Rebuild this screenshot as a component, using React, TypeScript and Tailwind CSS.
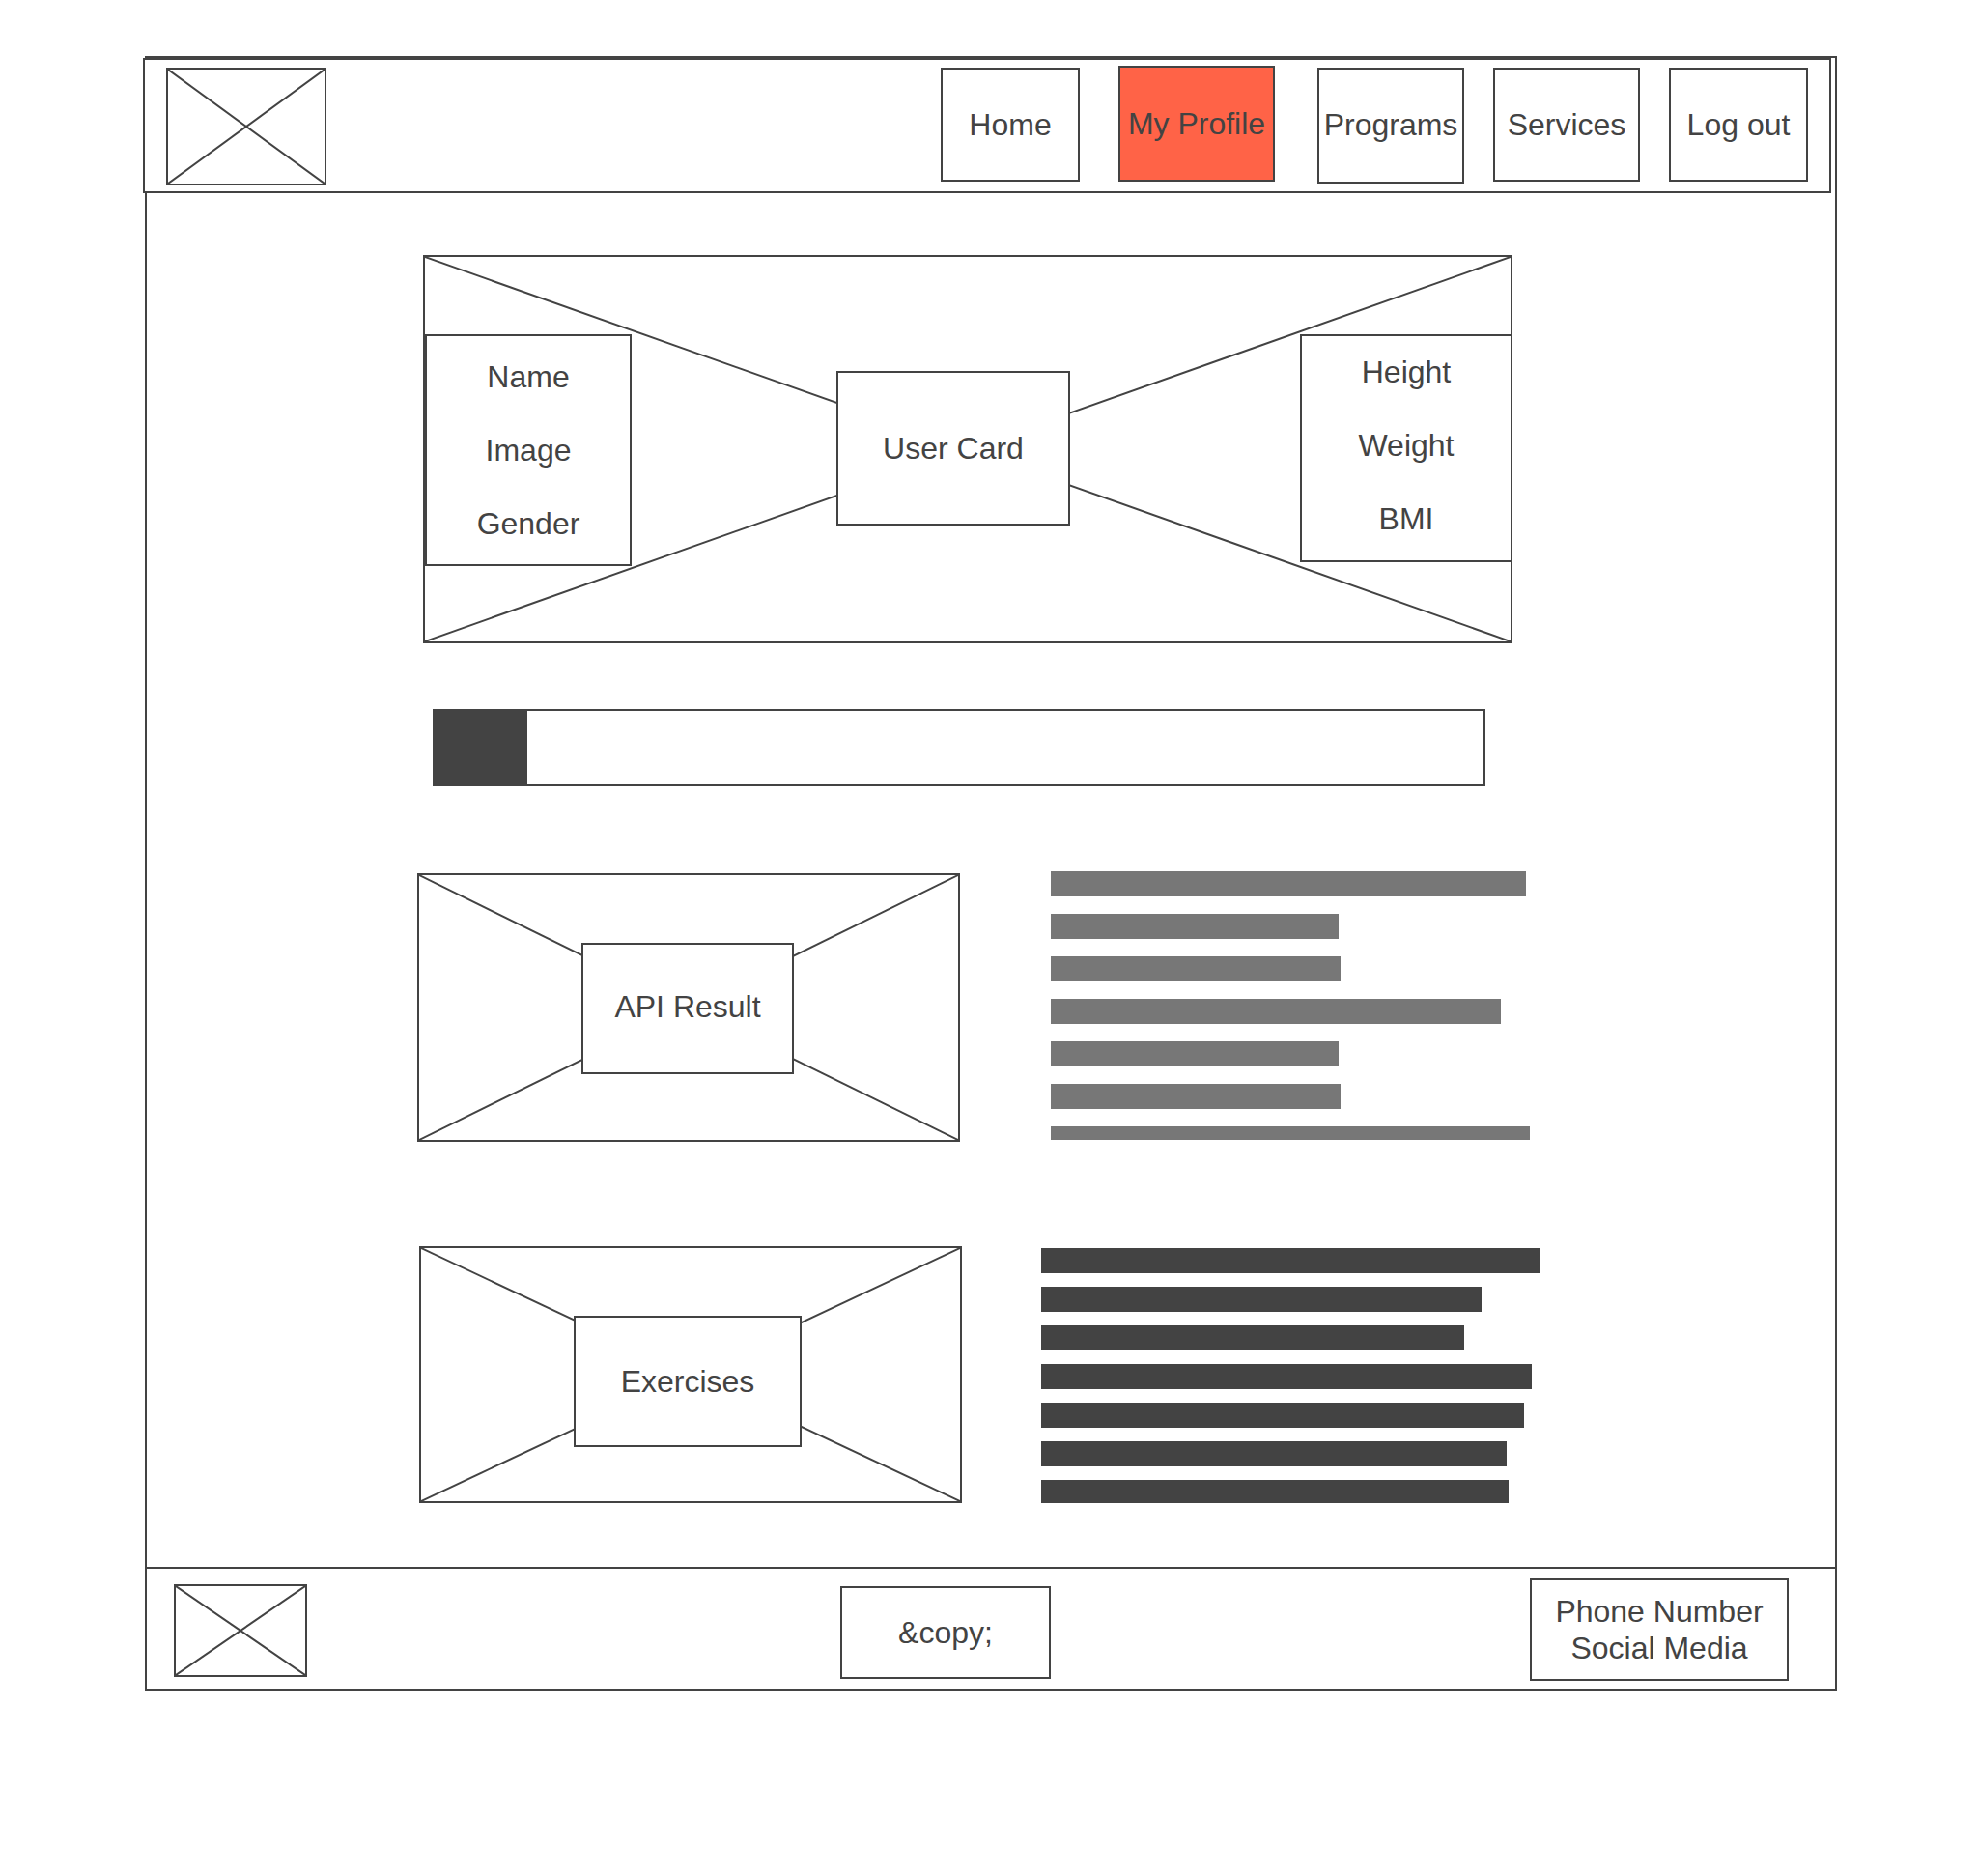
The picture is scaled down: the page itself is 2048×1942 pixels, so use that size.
import type { ReactNode } from "react";

function Cross() {
  return (
    <svg
      className="absolute inset-0 h-full w-full"
      stroke="#434343"
      strokeWidth="2"
      aria-hidden="true"
    >
      <line x1="0" y1="0" x2="100%" y2="100%" />
      <line x1="0" y1="100%" x2="100%" y2="0" />
    </svg>
  );
}

function Box({ className, children }: { className: string; children: ReactNode }) {
  return (
    <div
      className={`flex flex-col items-center justify-center border-2 border-[#434343] bg-white text-center ${className}`}
    >
      {children}
    </div>
  );
}

function Bars({
  widths,
  full,
  className,
  barClass,
}: {
  widths: number[];
  full: number;
  className: string;
  barClass: string;
}) {
  return (
    <div className={`flex flex-col ${className}`} aria-hidden="true">
      {widths.map((width, i) => (
        <div key={i} className={barClass} style={{ width: `${(width / full) * 100}%` }} />
      ))}
    </div>
  );
}

const navItem =
  "flex items-center justify-center whitespace-nowrap border-2 border-[#434343]";

const resultBars = [492, 298, 300, 466, 298, 300, 496];
const exerciseBars = [516, 456, 438, 508, 500, 482, 484];

export default function App() {
  return (
    <div className="min-h-screen bg-white pt-[58px] pr-[146px] pb-24 pl-[150px] font-['Liberation_Sans',Arial,sans-serif] text-[32px] leading-[38px] text-[#434343]">
      <div className="border-2 border-[#434343]">
        <header className="relative -ml-1 mr-1 flex h-[140px] items-start justify-between border-2 border-[#434343] bg-white pr-[22px] pl-[22px]">
          <div
            className="relative mt-2 h-[122px] w-[166px] border-2 border-[#434343]"
            role="img"
            aria-label="Logo"
          >
            <Cross />
          </div>
          <nav className="flex items-start pt-1.5">
            <a href="#home" className={`${navItem} mt-0.5 h-[118px] w-[144px]`}>
              Home
            </a>
            <a
              href="#profile"
              aria-current="page"
              className={`${navItem} ml-10 h-[120px] w-[162px] bg-[#ff6347]`}
            >
              My Profile
            </a>
            <a href="#programs" className={`${navItem} mt-0.5 ml-11 h-[120px] w-[152px] pb-0.5`}>
              Programs
            </a>
            <a href="#services" className={`${navItem} mt-0.5 ml-[30px] h-[118px] w-[152px]`}>
              Services
            </a>
            <button
              type="button"
              className={`${navItem} mt-0.5 ml-[30px] h-[118px] w-[144px] cursor-pointer`}
            >
              Log out
            </button>
          </nav>
        </header>

        <main className="px-[280px] pt-16 pb-[66px]">
          <section className="relative mr-[54px] ml-1.5 border-2 border-[#434343]">
            <Cross />
            <div className="relative -mr-0.5 grid grid-cols-[214px_212fr_242px_238fr_220px] items-start pt-20 pb-[78px]">
              <Box className="h-[240px] gap-[38px]">
                <p>Name</p>
                <p>Image</p>
                <p>Gender</p>
              </Box>
              <Box className="col-start-3 mt-[38px] h-[160px]">
                <h1>User Card</h1>
              </Box>
              <Box className="col-start-5 h-[236px] gap-[38px] pb-1.5">
                <p>Height</p>
                <p>Weight</p>
                <p>BMI</p>
              </Box>
            </div>
          </section>

          <div
            role="progressbar"
            aria-label="Progress"
            aria-valuemin={0}
            aria-valuemax={100}
            aria-valuenow={9}
            className="mt-[68px] mr-[82px] ml-4 h-20 border-2 border-[#434343]"
          >
            <div className="h-full bg-[#434343]" style={{ width: `${(96 / 1086) * 100}%` }} />
          </div>

          <section className="mt-[88px] mr-9 grid grid-cols-[562fr_496fr] items-start gap-[94px]">
            <div className="relative mt-0.5 flex justify-center border-2 border-[#434343] pt-[70px] pr-0.5 pb-[68px]">
              <Cross />
              <Box className="relative h-[136px] w-[220px] pb-1">
                <h2>API Result</h2>
              </Box>
            </div>
            <Bars
              widths={resultBars}
              full={496}
              className="gap-[18px]"
              barClass="h-[26px] bg-[#777777] last:h-[14px]"
            />
          </section>

          <section className="mt-[108px] mr-[26px] ml-0.5 grid grid-cols-[562fr_516fr] items-start gap-[82px]">
            <div className="relative flex justify-center border-2 border-[#434343] pt-[70px] pr-1.5 pb-14">
              <Cross />
              <Box className="relative h-[136px] w-[236px]">
                <h2>Exercises</h2>
              </Box>
            </div>
            <Bars
              widths={exerciseBars}
              full={516}
              className="mt-0.5 gap-3.5"
              barClass="h-[26px] bg-[#434343] last:h-6"
            />
          </section>
        </main>

        <footer className="grid h-[126px] grid-cols-[138px_552fr_218px_496fr_268px] items-start border-t-2 border-[#434343] pt-2.5 pr-12 pl-7">
          <div
            className="relative mt-1.5 h-24 border-2 border-[#434343]"
            role="img"
            aria-label="Footer logo"
          >
            <Cross />
          </div>
          <Box className="col-start-3 mt-2 h-24">
            <p>&amp;copy;</p>
          </Box>
          <Box className="col-start-5 h-[106px]">
            <p>Phone Number</p>
            <p>Social Media</p>
          </Box>
        </footer>
      </div>
    </div>
  );
}
